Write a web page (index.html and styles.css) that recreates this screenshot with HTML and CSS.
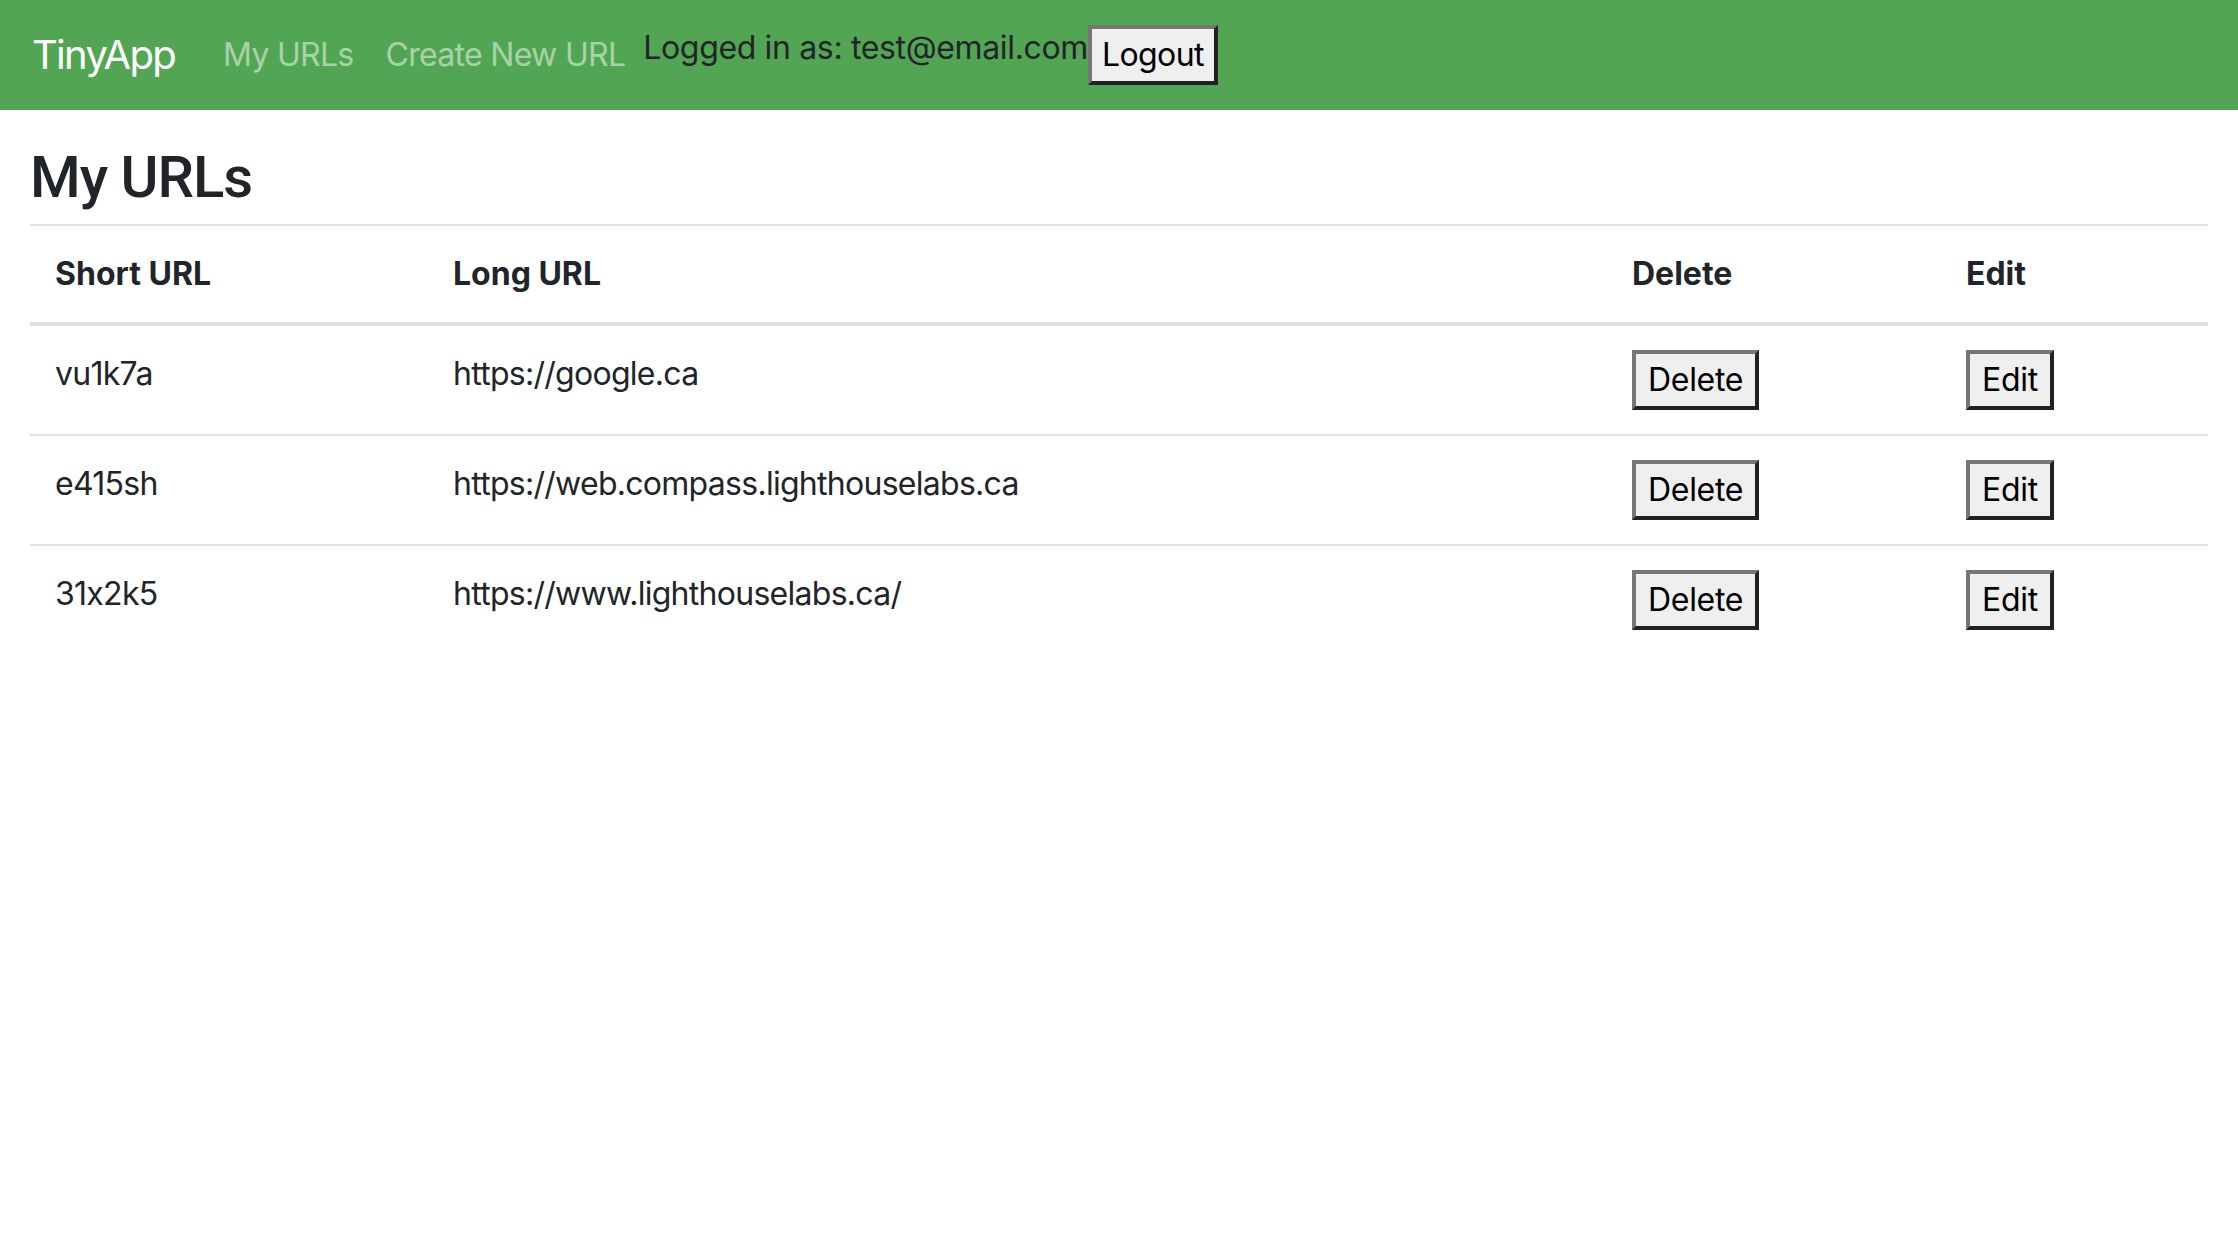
FILE: index.html
```html
<!DOCTYPE html>
<html lang="en">
<head>
<meta charset="utf-8">
<title>TinyApp</title>
<link rel="stylesheet" href="styles.css">
</head>
<body>
<nav class="navbar">
  <a class="brand" href="#">TinyApp</a>
  <div class="nav-links">
    <a class="nav-link" href="#">My URLs</a>
    <a class="nav-link" href="#">Create New URL</a>
  </div>
  <form class="login-form">
    <span class="logged">Logged in as: test@email.com</span>
    <button class="btn btn-nav" type="button">Logout</button>
  </form>
</nav>
<main class="container">
  <h2 class="title">My URLs</h2>
  <table class="table">
    <colgroup>
      <col class="c1"><col class="c2"><col class="c3"><col class="c4">
    </colgroup>
    <thead>
      <tr><th>Short URL</th><th>Long URL</th><th>Delete</th><th>Edit</th></tr>
    </thead>
    <tbody>
      <tr><td>vu1k7a</td><td>https://google.ca</td><td><button class="btn" type="button">Delete</button></td><td><button class="btn" type="button">Edit</button></td></tr>
      <tr><td>e415sh</td><td>https://web.compass.lighthouselabs.ca</td><td><button class="btn" type="button">Delete</button></td><td><button class="btn" type="button">Edit</button></td></tr>
      <tr><td>31x2k5</td><td>https://www.lighthouselabs.ca/</td><td><button class="btn" type="button">Delete</button></td><td><button class="btn" type="button">Edit</button></td></tr>
    </tbody>
  </table>
</main>
</body>
</html>
```
FILE: styles.css
```css
* { box-sizing: border-box; }
body {
  margin: 0;
  font-family: Inter, "Noto Sans", sans-serif;
  font-feature-settings: "calt" 0;
  font-size: 32px;
  line-height: 1.5;
  letter-spacing: -0.5px;
  color: #212529;
  background: #fff;
}
.navbar {
  display: flex;
  align-items: center;
  height: 110px;
  padding: 0 32px;
  background: #52a552;
}
.brand {
  font-size: 40px;
  letter-spacing: -1.7px;
  color: #fff;
  text-decoration: none;
  margin-right: 32px;
}
.nav-links { display: flex; }
.nav-link {
  color: rgba(255,255,255,0.5);
  text-decoration: none;
  letter-spacing: -0.7px;
  padding: 0 16px;
}
.login-form {
  display: flex;
  align-items: center;
}
.logged {
  letter-spacing: -0.35px;
  margin-top: -14px;
  margin-left: 2px;
}
.btn {
  font-family: inherit;
  font-size: 32px;
  line-height: 48px;
  letter-spacing: -0.3px;
  color: #000;
  background: #efefef;
  border: 4px outset #767676;
  border-radius: 0;
  padding: 2px 12px;
  margin: 0;
}
.btn-nav {
  padding: 2px 10px;
  letter-spacing: -0.6px;
}
.container {
  padding: 0 30px;
}
.title {
  font-family: Roboto, Inter, sans-serif;
  font-size: 58px;
  font-weight: 500;
  letter-spacing: -1px;
  line-height: 1.2;
  margin: 0;
  padding-top: 33px;
  height: 114px;
}
.table {
  width: 100%;
  border-collapse: collapse;
}
.c1 { width: 398px; }
.c2 { width: 1179px; }
.c3 { width: 334px; }
.table th, .table td {
  padding: 24px 24px 24px 25px;
  text-align: left;
  vertical-align: top;
  border-top: 2px solid #dee2e6;
}
.table td { letter-spacing: -0.72px; }
.table td .btn { letter-spacing: -0.3px; }
.table th { font-weight: 700; letter-spacing: 0; }
.table thead th { border-bottom: 4px solid #dee2e6; }
```
